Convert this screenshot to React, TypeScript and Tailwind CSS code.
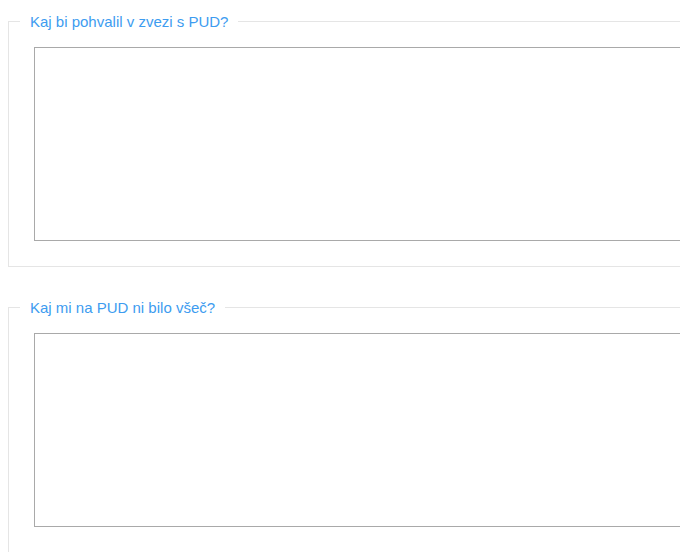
const questions = [
  { id: "pohvala", label: "Kaj bi pohvalil v zvezi s PUD?" },
  { id: "kritika", label: "Kaj mi na PUD ni bilo všeč?" },
]

export default function App() {
  return (
    <div className="h-[552px] w-[680px] overflow-hidden bg-white font-['Liberation_Sans',Arial,sans-serif]">
      <form className="w-[760px] pt-[13px] pl-2">
        {questions.map(({ id, label }) => (
          <fieldset
            key={id}
            className="mb-[32px] border border-[#e5e5e5] px-[25px] pb-[25px] pt-[17px]"
          >
            <legend className="-ml-[14px] px-[10px] text-[15px] leading-[17px] text-[#3d9cf0]">
              {label}
            </legend>
            <textarea
              id={id}
              className="block h-[194px] w-full resize-none border border-[#a9a9a9] bg-white outline-none"
            />
          </fieldset>
        ))}
      </form>
    </div>
  )
}
